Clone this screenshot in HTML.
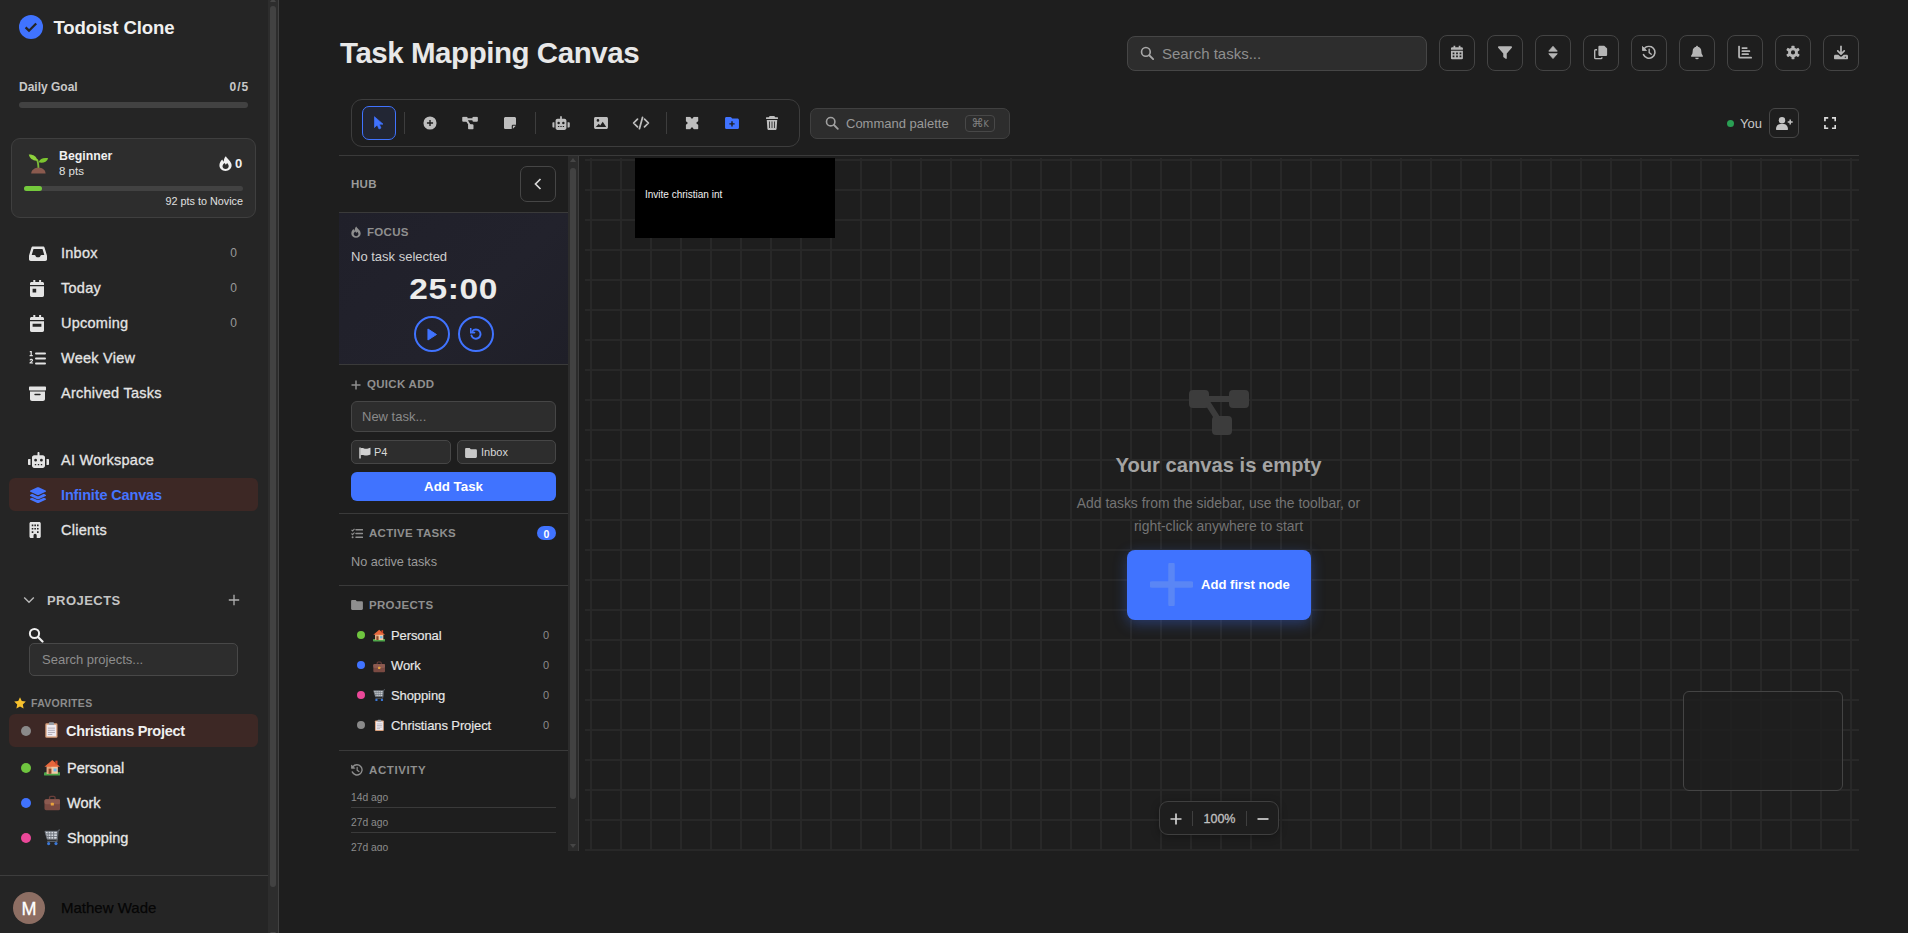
<!DOCTYPE html>
<html lang="en">
<head>
<meta charset="utf-8">
<title>Todoist Clone - Task Mapping Canvas</title>
<style>
*{box-sizing:border-box;margin:0;padding:0}
html,body{width:1908px;height:933px;overflow:hidden;background:#1e1e1e;color:#e0e0e0;font-family:"Liberation Sans",sans-serif;}
body{position:relative}
.abs{position:absolute}
svg{display:block}
.t{position:absolute;white-space:nowrap;line-height:1}
/* ---------- sidebar ---------- */
#sidebar{position:absolute;left:0;top:0;width:279px;height:933px;background:#252525;border-right:1px solid #424242;overflow:hidden}
#sb-track{position:absolute;left:268px;top:0;width:10px;height:933px;background:#2d2d2d}
#sb-thumb{position:absolute;left:270px;top:6px;width:6px;height:881px;border-radius:3px;background:#424242}
.nav{position:absolute;left:9px;width:249px;height:33px;border-radius:6px}
.nav.active{background:#3d2825}
.nav .ic{position:absolute;left:19.700px;top:8.600px;width:18px;height:17px;color:#e4e4e4}
.nav .lb{position:absolute;left:52px;top:9px;font-size:14.5px;line-height:16px;color:#e4e4e4;white-space:nowrap;letter-spacing:.25px;-webkit-text-stroke:.3px #e4e4e4}
.nav.active .lb{color:#4574ff;font-weight:bold;letter-spacing:-.15px;-webkit-text-stroke:0}
.nav .ct{position:absolute;right:21px;top:10px;font-size:12px;line-height:14px;color:#9a9a9a}
.dot{position:absolute;border-radius:50%}
/* ---------- main ---------- */
#main{position:absolute;left:279px;top:0;width:1629px;height:933px;background:#1e1e1e}
.hbtn{position:absolute;top:35px;width:36px;height:36px;border:1px solid #444;border-radius:8px;background:#1e1e1e;color:#b6b6b6}
.hbtn svg{position:absolute;left:50%;top:50%;transform:translate(-50%,-54%)}
.tbtn{position:absolute;top:106px;width:34px;height:34px;border-radius:7px;color:#bebebe}
.tbtn svg{position:absolute;left:50%;top:50%;transform:translate(-50%,-50%)}
.tsep{position:absolute;top:112px;width:1px;height:22px;background:#3d3d3d}
.hline{position:absolute;height:1px;background:#3a3a3a}
.sec{position:absolute;font-size:11px;font-weight:bold;letter-spacing:.3px;color:#8f8f8f;line-height:1;white-space:nowrap}
</style>
</head>
<body>
<div id="sidebar">
  <div id="sb-track"></div><svg class="abs" style="left:270px;top:-2px" width="6" height="4" viewBox="0 0 6 4"><path d="M3 0 L6 4 H0Z" fill="#464646"/></svg><svg class="abs" style="left:270px;top:932px" width="6" height="4" viewBox="0 0 6 4"><path d="M3 4 L6 0 H0Z" fill="#464646"/></svg><div id="sb-thumb"></div>
  <!-- logo -->
  <svg class="abs" style="left:19px;top:15px" width="24" height="24" viewBox="0 0 24 24"><circle cx="12" cy="12" r="12" fill="#4073ff"/><path d="M6.6 12.4l3.4 3.3 7.2-7.2" fill="none" stroke="#252525" stroke-width="2.3"/></svg>
  <div class="t" style="left:53.500px;top:19px;font-size:18.600px;font-weight:bold;color:#f0f0f0;letter-spacing:-.12px">Todoist Clone</div>
  <!-- daily goal -->
  <div class="t" style="left:19px;top:81px;font-size:12px;font-weight:bold;color:#c8c8c8">Daily Goal</div>
  <div class="t" style="right:29px;top:81px;font-size:12px;font-weight:bold;color:#c8c8c8;letter-spacing:.9px">0/5</div>
  <div class="abs" style="left:19px;top:102px;width:229px;height:6px;border-radius:3px;background:#424242"></div>
  <!-- level card -->
  <div class="abs" style="left:11px;top:138px;width:245px;height:80px;border:1px solid #3f3f3f;border-radius:9px;background:#2d2d2d">
    <svg class="abs" style="left:15.500px;top:14px" width="21" height="21" viewBox="0 0 21 21">
      <path d="M10.5 16 C10.3 11 10 8.5 9 6.5" fill="none" stroke="#7bb83a" stroke-width="1.8"/>
      <path d="M9.6 7.6 C8.5 3.2 4.5 1.2 0.8 1.6 C1.6 5.6 5.2 8.2 9.6 7.6Z" fill="#8ed23c"/>
      <path d="M10.6 9.3 C11.6 5.6 15.8 4.2 20.2 5.2 C18.8 9.2 14.4 10.6 10.6 9.3Z" fill="#7cc62f"/>
      <path d="M3.2 20.4 C3.6 16.6 6.6 14.8 10.5 14.8 C14.4 14.8 17.2 16.6 17.6 20.4Z" fill="#8a5a4e"/>
    </svg>
    <div class="t" style="left:47px;top:11px;font-size:12.3px;font-weight:bold;color:#f0f0f0">Beginner</div>
    <div class="t" style="left:47px;top:27px;font-size:11.500px;color:#e0e0e0">8 pts</div>
    <svg class="abs" style="left:207px;top:17px" width="13" height="15" viewBox="0 0 13 15"><path d="M6.9 0.2 C7.6 2 9.4 3 10.8 4.9 C12 6.5 12.6 7.9 12.6 9.3 C12.6 12.5 9.9 14.9 6.5 14.9 C3.1 14.9 0.4 12.5 0.4 9.3 C0.4 6.9 1.9 4.9 3.3 3.6 C3.6 4.6 4.1 5.3 4.8 5.8 C4.7 3.6 5.4 1.5 6.9 0.2Z M6.6 13 C8.4 13 9.7 11.8 9.7 10.2 C9.7 8.9 8.9 8 8.1 7.1 C7.7 8 7.2 8.4 6.7 8.7 C6.5 7.9 6 7.3 5.4 6.9 C4.4 7.9 3.5 8.9 3.5 10.2 C3.5 11.8 4.8 13 6.6 13Z" fill="#f0f0f0" fill-rule="evenodd"/></svg>
    <div class="t" style="left:223px;top:18px;font-size:13px;font-weight:bold;color:#f0f0f0">0</div>
    <div class="abs" style="left:12px;top:47px;width:219px;height:5px;border-radius:3px;background:#424242"><div style="width:18px;height:5px;border-radius:3px;background:#74c93c"></div></div>
    <div class="t" style="right:12px;top:57.300px;font-size:10.800px;color:#e0e0e0">92 pts to Novice</div>
  </div>
  <!-- nav -->
  <div class="nav" style="top:236px"><svg class="ic" viewBox="0 0 18 17"><path d="M3.9 1.6 h10.2 c.7 0 1.3.5 1.5 1.1 l2.2 7.2 c.1.3.2.6.2 1 v3.4 c0 .9-.8 1.7-1.7 1.7 H1.7 C.8 16 0 15.200 0 14.300 v-3.4 c0-.4.1-.7.2-1 L2.400 2.700 c.2-.6.8-1.1 1.500-1.100z M4.500 4 L2.700 10 h2.800 c.4 0 .7.2.9.5 l.6 1.200 c.2.300.5.500.900.500 h2.200 c.4 0 .7-.2.900-.5 l.6-1.200 c.2-.3.5-.5.9-.5 h2.800 L13.500 4z" fill="currentColor" fill-rule="evenodd"/></svg><span class="lb">Inbox</span><span class="ct">0</span></div>
  <div class="nav" style="top:271px"><svg class="ic" viewBox="0 0 18 17"><path d="M4.300 0 h2 v2 h3.800 v-2 h2 v2 h1.300 c.9 0 1.600.7 1.600 1.600 v1.400 H1 V3.600 C1 2.700 1.700 2 2.600 2 h1.700z M1 6.300 h14 v9 c0 .9-.7 1.600-1.600 1.600 H2.600 c-.9 0-1.600-.7-1.600-1.600z M3.600 8.800 v3.600 h3.600 v-3.600z" fill="currentColor" fill-rule="evenodd"/></svg><span class="lb">Today</span><span class="ct">0</span></div>
  <div class="nav" style="top:306px"><svg class="ic" viewBox="0 0 18 17"><path d="M4.300 0 h2 v2 h3.800 v-2 h2 v2 h1.300 c.9 0 1.600.7 1.600 1.600 v1.400 H1 V3.600 C1 2.700 1.700 2 2.600 2 h1.700z M1 6.300 h14 v9 c0 .9-.7 1.600-1.600 1.600 H2.600 c-.9 0-1.600-.7-1.600-1.600z M3.600 8.800 v3 h8.800 v-3z" fill="currentColor" fill-rule="evenodd"/></svg><span class="lb">Upcoming</span><span class="ct">0</span></div>
  <div class="nav" style="top:341px"><svg class="ic" viewBox="0 0 18 17"><g fill="currentColor"><rect x="6" y="2.500" width="11" height="2" rx="1"/><rect x="6" y="7.500" width="11" height="2" rx="1"/><rect x="6" y="12.500" width="11" height="2" rx="1"/><path d="M.8 1 h2 v4 h1 v1.200 H.6 V5 h1 V2.200 H.8z"/><path d="M.5 10.300 c0-1 .8-1.600 1.800-1.600 s1.800.6 1.800 1.500 c0 .6-.3 1-.8 1.400 l-.9.800 h1.700 v1.200 H.5 v-1 l1.900-1.700 c.3-.3.400-.4.400-.6 0-.3-.2-.4-.5-.4 s-.6.200-.6.600z"/></g></svg><span class="lb">Week View</span></div>
  <div class="nav" style="top:376px"><svg class="ic" viewBox="0 0 18 17"><path d="M1 1.500 h15 c.5 0 1 .4 1 1 v2 c0 .5-.4 1-1 1 H1 c-.5 0-1-.4-1-1 v-2 c0-.5.4-1 1-1z M1 6.600 h15 v7.300 c0 1.100-.9 2-2 2 H3 c-1.100 0-2-.9-2-2z M6 8.800 c-.4 0-.7.3-.7.700 s.3.700.7.700 h5 c.4 0 .7-.3.700-.7 s-.3-.7-.7-.7z" fill="currentColor" fill-rule="evenodd"/></svg><span class="lb">Archived Tasks</span></div>

  <div class="nav" style="top:443px"><svg class="ic" style="width:21px;left:19px" viewBox="0 0 21 17"><path d="M10.500 0 c.6 0 1 .4 1 1 v2.200 h3.300 c1.200 0 2.200 1 2.200 2.200 v8.400 c0 1.200-1 2.200-2.200 2.200 H6.200 c-1.200 0-2.200-1-2.200-2.200 V5.400 c0-1.200 1-2.200 2.200-2.200 h3.300 V1 c0-.6.400-1 1-1z M7.600 6.800 a1.400 1.400 0 1 0 0 2.800 a1.400 1.400 0 0 0 0-2.800z M13.400 6.800 a1.400 1.400 0 1 0 0 2.800 a1.400 1.400 0 0 0 0-2.800z M6.800 12 v1.200 h1.400 V12z M9.800 12 v1.200 h1.400 V12z M12.800 12 v1.200 h1.400 V12z M0 8 c0-.6.400-1 1-1 h1.500 v6 H1 c-.6 0-1-.4-1-1z M18.500 7 H20 c.6 0 1 .4 1 1 v4 c0 .6-.4 1-1 1 h-1.500z" fill="currentColor" fill-rule="evenodd"/></svg><span class="lb">AI Workspace</span></div>
  <div class="nav active" style="top:478px"><svg class="ic" style="color:#4574ff;height:16px" viewBox="0 0 18 17"><g fill="currentColor"><path d="M8.300.3 c.4-.2 1-.2 1.400 0 l7.400 3.400 c.6.300.6 1.100 0 1.400 L9.700 8.500 c-.4.200-1 .2-1.400 0 L.9 5.100 C.3 4.800.3 4 .9 3.700z"/><path d="M2.800 7.300 L.9 8.200 c-.6.300-.6 1.100 0 1.400 l7.400 3.400 c.4.200 1 .2 1.400 0 l7.400-3.400 c.6-.3.6-1.100 0-1.400 l-1.900-.9 -4.900 2.200 c-.8.400-1.800.4-2.600 0z"/><path d="M2.800 11.300 l-1.900.9 c-.6.300-.6 1.100 0 1.400 l7.400 3.400 c.4.200 1 .2 1.400 0 l7.400-3.400 c.6-.3.6-1.100 0-1.400 l-1.900-.9 -4.900 2.200 c-.8.400-1.800.4-2.600 0z"/></g></svg><span class="lb">Infinite Canvas</span></div>
  <div class="nav" style="top:513px"><svg class="ic" style="left:18.700px;height:16px" viewBox="0 0 18 17"><path d="M2.600 0 h8.800 c.9 0 1.600.7 1.600 1.600 v13.800 c0 .9-.7 1.600-1.600 1.600 H8.700 v-2.700 c0-.9-.7-1.700-1.700-1.700 s-1.700.8-1.700 1.700 V17 H2.600 C1.700 17 1 16.300 1 15.400 V1.600 C1 .7 1.700 0 2.600 0z M3.400 2.700 v1.700 h1.700 V2.700z M6.200 2.700 v1.700 h1.700 V2.700z M9 2.700 v1.700 h1.700 V2.700z M3.400 6.300 V8 h1.700 V6.300z M6.200 6.300 V8 h1.700 V6.300z M9 6.300 V8 h1.700 V6.300z M3.400 9.900 v1.700 h1.700 V9.900z M9 9.900 v1.700 h1.700 V9.900z" fill="currentColor" fill-rule="evenodd"/></svg><span class="lb">Clients</span></div>


  <!-- projects header -->
  <svg class="abs" style="left:23px;top:595px" width="12" height="10" viewBox="0 0 12 10"><path d="M1.200 2.500 L6 7.300 L10.800 2.500" fill="none" stroke="#b8b8b8" stroke-width="1.400"/></svg>
  <div class="t" style="left:47px;top:594px;font-size:13px;font-weight:bold;letter-spacing:.45px;color:#c4c4c4">PROJECTS</div>
  <svg class="abs" style="left:228px;top:594px" width="12" height="12" viewBox="0 0 12 12"><path d="M6 .8 V11.200 M.8 6 H11.200" stroke="#b0b0b0" stroke-width="1.300" fill="none"/></svg>
  <svg class="abs" style="left:28px;top:627px" width="16" height="16" viewBox="0 0 16 16"><circle cx="6.500" cy="6.500" r="4.600" fill="none" stroke="#f0f0f0" stroke-width="2"/><path d="M10 10 L14.500 14.500" stroke="#f0f0f0" stroke-width="2.200" stroke-linecap="round"/></svg>
  <div class="abs" style="left:29px;top:643px;width:209px;height:33px;border:1px solid #484848;border-radius:5px;background:#2d2d2d"><div class="t" style="left:12px;top:9px;font-size:13px;color:#8e8e8e">Search projects...</div></div>
  <!-- favorites -->
  <svg class="abs" style="left:14px;top:697px" width="12" height="12" viewBox="0 0 12 12"><path d="M6 .3 L7.750 4.100 L11.800 4.600 L8.800 7.400 L9.600 11.500 L6 9.500 L2.400 11.500 L3.200 7.400 L.2 4.600 L4.250 4.100Z" fill="#f6c12e"/></svg>
  <div class="t" style="left:31px;top:698px;font-size:10.500px;font-weight:bold;letter-spacing:.3px;color:#8c8c8c">FAVORITES</div>
  <div class="nav active" style="top:714px">
    <span class="dot" style="left:12px;top:12px;width:10px;height:10px;background:#8a8a8a"></span>
    <svg class="abs" style="left:35.200px;top:8px" width="14.800" height="16.600" viewBox="0 0 17 19"><rect x="1.500" y="1.500" width="14" height="16.500" rx="1.500" fill="#d9a07c"/><rect x="3" y="3.200" width="11" height="13.300" fill="#eeeaf0"/><rect x="5.500" y=".3" width="6" height="3.200" rx="1" fill="#9aa0a8"/><path d="M4.500 7 h8 M4.500 9.500 h8 M4.500 12 h8 M4.500 14.300 h5" stroke="#a8a4b0" stroke-width="1"/></svg>
    <div class="t" style="left:57px;top:10px;font-size:14.500px;font-weight:bold;color:#f0f0f0;letter-spacing:-.3px">Christians Project</div>
  </div>
  <div class="nav" style="top:751px">
    <span class="dot" style="left:12px;top:12px;width:10px;height:10px;background:#6fc53f"></span>
    <svg class="abs" style="left:34.700px;top:8.200px" width="16.600" height="16.600" viewBox="0 0 18 18"><rect x="0" y="14.500" width="18" height="3.500" rx="1" fill="#4ea84a"/><rect x="3" y="7.500" width="12" height="8.500" fill="#f2c9a4"/><rect x="3" y="7.500" width="5" height="8.500" fill="#e0a77e"/><path d="M9 1 L17.500 8.500 H.5Z" fill="#e8673c"/><rect x="12.300" y="1.800" width="2.400" height="4" fill="#c9452a"/><rect x="5" y="10.500" width="3" height="5.500" fill="#8c4a2c"/><rect x="10.300" y="10.300" width="3.400" height="3.200" fill="#6db8e8"/></svg>
    <div class="t" style="left:58px;top:10px;font-size:14.500px;color:#e8e8e8;-webkit-text-stroke:.3px #e8e8e8">Personal</div>
  </div>
  <div class="nav" style="top:786px">
    <span class="dot" style="left:12px;top:12px;width:10px;height:10px;background:#4073ff"></span>
    <svg class="abs" style="left:34.700px;top:9px" width="16.600" height="16.600" viewBox="0 0 18 18"><path d="M6 4.500 V3 c0-.8.600-1.500 1.500-1.500 h3 c.9 0 1.500.7 1.500 1.500 v1.500" fill="none" stroke="#6a3f3a" stroke-width="1.500"/><rect x=".5" y="4.500" width="17" height="12" rx="1.800" fill="#7a4a42"/><rect x=".5" y="4.500" width="17" height="5.500" rx="1.800" fill="#8c5a50"/><rect x="7.300" y="8.500" width="3.400" height="3" rx=".6" fill="#e8a33c"/></svg>
    <div class="t" style="left:58px;top:10px;font-size:14.500px;color:#e8e8e8;-webkit-text-stroke:.3px #e8e8e8">Work</div>
  </div>
  <div class="nav" style="top:821px">
    <span class="dot" style="left:12px;top:12px;width:10px;height:10px;background:#eb4899"></span>
    <svg class="abs" style="left:34.700px;top:8px" width="16.600" height="16.600" viewBox="0 0 18 18"><path d="M1 2.500 H14.500 V11 H3.500Z" fill="#d8dce2"/><path d="M1 2.500 H14.500 M2 5.300 H14.500 M2.800 8.100 H14.500 M3.500 11 H14.500 M4.500 2.500 V11 M7.500 2.500 V11 M10.500 2.500 V11 M14.500 2.500 V11 M1 2.500 L3.500 11" stroke="#6a7078" stroke-width="1" fill="none"/><path d="M17.500 .8 L15.500 1.500 L14 13.500 H3.500" stroke="#5a6068" stroke-width="1.300" fill="none"/><circle cx="5" cy="15.800" r="1.700" fill="#3b78d8"/><circle cx="13" cy="15.800" r="1.700" fill="#3b78d8"/></svg>
    <div class="t" style="left:58px;top:10px;font-size:14.500px;color:#e8e8e8;-webkit-text-stroke:.3px #e8e8e8">Shopping</div>
  </div>
  <!-- footer -->
  <div class="abs" style="left:0;top:875px;width:268px;height:1px;background:#3d3d3d"></div>
  <div class="abs" style="left:13px;top:892px;width:32px;height:32px;border-radius:50%;background:#8d6e63"><div class="t" style="left:0;width:32px;text-align:center;top:7.500px;font-size:18px;color:#fff;-webkit-text-stroke:.3px #fff">M</div></div>
  <div class="t" style="left:61px;top:900px;font-size:15px;color:#060606;-webkit-text-stroke:.25px #060606">Mathew Wade</div>
</div>
<div id="main">
  <div class="t" style="left:61px;top:38px;font-size:29.500px;font-weight:bold;color:#e8e8e8;letter-spacing:-.45px">Task Mapping Canvas</div>
  <div class="abs" style="left:848px;top:36px;width:300px;height:35px;border:1px solid #464646;border-radius:8px;background:#2d2d2d">
    <svg class="abs" style="left:11.500px;top:8.500px" width="14.500" height="14.500" viewBox="0 0 16 16"><circle cx="6.500" cy="6.500" r="4.800" fill="none" stroke="#a8a8a8" stroke-width="1.800"/><path d="M10.200 10.200 L14.500 14.500" stroke="#a8a8a8" stroke-width="2" stroke-linecap="round"/></svg>
    <div class="t" style="left:34px;top:9px;font-size:15px;color:#8f8f8f">Search tasks...</div>
  </div>
  <div class="hbtn" style="left:1160px"><svg width="12.2" height="14.0" viewBox="0 0 14 16"><path d="M3 0 h2 v2 h4 V0 h2 v2 h1.500 c.8 0 1.500.7 1.500 1.500 V5 H0 V3.500 C0 2.700.7 2 1.500 2 H3z M0 6 h14 v8.500 c0 .8-.7 1.500-1.500 1.500 h-11 C.7 16 0 15.300 0 14.500z M2 8 v2 h2 V8z M6 8 v2 h2 V8z M10 8 v2 h2 V8z M2 11.500 v2 h2 v-2z M6 11.500 v2 h2 v-2z M10 11.500 v2 h2 v-2z" fill="currentColor" fill-rule="evenodd"/></svg></div>
  <div class="hbtn" style="left:1208px"><svg width="14.0" height="14.0" viewBox="0 0 16 16"><path d="M.9 1 h14.200 c.8 0 1.200.9.700 1.500 L10 9.300 V14.500 c0 .7-.8 1.100-1.300.7 l-2.300-1.700 C6.100 13.300 6 13 6 12.700 V9.300 L.2 2.500 C-.3 1.900.1 1 .9 1z" fill="currentColor"/></svg></div>
  <div class="hbtn" style="left:1256px"><svg width="9.6" height="14.0" viewBox="0 0 11 16"><path d="M5.500 1 L10.400 6.500 H.6Z M5.500 15 L.6 9.500 H10.400Z" fill="currentColor" stroke="currentColor" stroke-width="1" stroke-linejoin="round"/></svg></div>
  <div class="hbtn" style="left:1304px"><svg width="14.0" height="14.0" viewBox="0 0 16 16"><path d="M6.500 0 h5 L15 3.500 V10.500 c0 .8-.7 1.500-1.500 1.500 h-7 C5.700 12 5 11.300 5 10.500 v-9 C5 .7 5.700 0 6.500 0z" fill="currentColor"/><path d="M3.500 5 H1.800 C1.200 5 .8 5.400.8 6 v8.200 c0 .6.400 1 1 1 H8 c.6 0 1-.4 1-1 V13.500" fill="none" stroke="currentColor" stroke-width="1.600"/></svg></div>
  <div class="hbtn" style="left:1352px"><svg width="14.0" height="14.0" viewBox="0 0 16 16"><path d="M2.600 3.600 A6.800 6.800 0 1 1 1.700 10.500" fill="none" stroke="currentColor" stroke-width="1.800" stroke-linecap="round"/><path d="M.5 1.200 V5.800 H5.100Z" fill="currentColor" stroke="currentColor" stroke-width="1" stroke-linejoin="round"/><path d="M8.200 4.300 V8.200 L10.600 10" fill="none" stroke="currentColor" stroke-width="1.600" stroke-linecap="round"/></svg></div>
  <div class="hbtn" style="left:1400px"><svg width="12.2" height="14.0" viewBox="0 0 14 16"><path d="M7 0 c.6 0 1 .4 1 1 v.6 c2.300.5 4 2.500 4 4.900 v.6 c0 1.500.5 2.900 1.400 4.100 l.4.500 c.4.500.1 1.300-.6 1.300 H.8 c-.7 0-1-.8-.6-1.300 l.4-.5 C1.500 10 2 8.600 2 7.100 v-.6 C2 4.100 3.700 2.100 6 1.600 V1 c0-.6.400-1 1-1z M5 14 h4 c0 1.100-.9 2-2 2 s-2-.9-2-2z" fill="currentColor"/></svg></div>
  <div class="hbtn" style="left:1448px"><svg width="14.0" height="14.0" viewBox="0 0 16 16"><path d="M1.200 1 V12.800 c0 .7.500 1.200 1.200 1.200 H15" fill="none" stroke="currentColor" stroke-width="2" stroke-linecap="round"/><path d="M5 3 H10 M5 6.500 H13 M5 10 H11.500" stroke="currentColor" stroke-width="2" stroke-linecap="round"/></svg></div>
  <div class="hbtn" style="left:1496px"><svg width="14.0" height="14.0" viewBox="0 0 16 16"><path d="M8 2.400 A5.600 5.600 0 1 0 8 13.600 A5.600 5.600 0 1 0 8 2.400z M8 5.600 A2.400 2.400 0 1 1 8 10.400 A2.400 2.400 0 1 1 8 5.600z" fill="currentColor" fill-rule="evenodd"/><g fill="currentColor"><rect x="6.300" y="0" width="3.400" height="4" rx=".8"/><rect x="6.300" y="12" width="3.400" height="4" rx=".8"/><rect x="6.300" y="0" width="3.400" height="4" rx=".8" transform="rotate(60 8 8)"/><rect x="6.300" y="12" width="3.400" height="4" rx=".8" transform="rotate(60 8 8)"/><rect x="6.300" y="0" width="3.400" height="4" rx=".8" transform="rotate(120 8 8)"/><rect x="6.300" y="12" width="3.400" height="4" rx=".8" transform="rotate(120 8 8)"/></g></svg></div>
  <div class="hbtn" style="left:1544px"><svg width="14.0" height="14.0" viewBox="0 0 16 16"><path d="M8 .8 V9.500 M4.300 6.300 L8 10 L11.700 6.300" fill="none" stroke="currentColor" stroke-width="2" stroke-linecap="round" stroke-linejoin="round"/><path d="M1.500 10.500 H4.800 L6.500 12.200 c.8.800 2.200.8 3 0 L11.200 10.500 H14.500 c.8 0 1.500.7 1.500 1.500 v2.500 c0 .8-.7 1.500-1.500 1.500 h-13 C.7 16 0 15.300 0 14.500 V12 c0-.8.700-1.500 1.500-1.500z M13 12.600 a.8.800 0 1 0 0 1.600 a.8.800 0 0 0 0-1.600z" fill="currentColor" fill-rule="evenodd"/></svg></div>
  <!-- toolbar -->
  <div class="abs" style="left:72px;top:99px;width:449px;height:48px;border:1px solid #3d3d3d;border-radius:11px;background:#1e1e1e"></div>
  <div class="tbtn" style="left:83px;border:1.500px solid #4073ff;background:#222634;color:#4073ff"><svg width="10.5" height="14.0" viewBox="0 0 12 16"><path d="M.8 .8 V13.200 L4 10.200 L6 14.800 L8.300 13.800 L6.300 9.300 H10.600Z" fill="currentColor" stroke="currentColor" stroke-width=".8" stroke-linejoin="round"/></svg></div>
  <div class="tbtn" style="left:134px"><svg width="14.0" height="14.0" viewBox="0 0 16 16"><path d="M8 .5 A7.500 7.500 0 1 0 8 15.500 A7.500 7.500 0 1 0 8 .5z M7.200 4.500 h1.600 v2.700 h2.700 v1.600 H8.800 v2.700 H7.200 V8.800 H4.500 V7.200 h2.700z" fill="currentColor" fill-rule="evenodd"/></svg></div>
  <div class="tbtn" style="left:174px"><svg width="15.8" height="13.1" viewBox="0 0 18 15"><path d="M3 3.200 H15 M4.500 3.200 L10 12" stroke="currentColor" stroke-width="2.300" fill="none"/><rect x="0" y=".2" width="6.200" height="6" rx="1.300" fill="currentColor"/><rect x="11.800" y=".2" width="6.200" height="6" rx="1.300" fill="currentColor"/><rect x="6.800" y="9" width="6.200" height="6" rx="1.300" fill="currentColor"/></svg></div>
  <div class="tbtn" style="left:214px"><svg width="12.2" height="12.2" viewBox="0 0 14 14"><path d="M2 0 h10 c1.100 0 2 .9 2 2 v7 h-3.500 c-.8 0 -1.500.7-1.500 1.500 V14 H2 c-1.100 0-2-.9-2-2 V2 C0 .9.9 0 2 0z M10.300 13.700 V10.800 c0-.3.200-.5.500-.5 h2.900z" fill="currentColor"/></svg></div>
  <div class="tbtn" style="left:265px"><svg width="17.5" height="14.0" viewBox="0 0 20 16"><path d="M10 0 c.6 0 1 .4 1 1 v2 h3 c1.200 0 2.200 1 2.200 2.200 v8.600 c0 1.200-1 2.200-2.200 2.200 H6 c-1.200 0-2.200-1-2.200-2.200 V5.200 C3.800 4 4.800 3 6 3 h3 V1 c0-.6.400-1 1-1z M7.300 6.500 a1.400 1.400 0 1 0 0 2.800 a1.400 1.400 0 0 0 0-2.800z M12.700 6.500 a1.400 1.400 0 1 0 0 2.800 a1.400 1.400 0 0 0 0-2.800z M6.500 11.500 v1.200 h1.500 v-1.200z M9.250 11.500 v1.200 h1.500 v-1.200z M12 11.500 v1.200 h1.500 v-1.200z M0 8 c0-.6.400-1 1-1 h1.500 v6 H1 c-.6 0-1-.4-1-1z M17.500 7 H19 c.6 0 1 .4 1 1 v4 c0 .6-.4 1-1 1 h-1.500z" fill="currentColor" fill-rule="evenodd"/></svg></div>
  <div class="tbtn" style="left:305px"><svg width="14.0" height="12.2" viewBox="0 0 16 14"><path d="M2 0 h12 c1.100 0 2 .9 2 2 v10 c0 1.100-.9 2-2 2 H2 c-1.100 0-2-.9-2-2 V2 C0 .9.900 0 2 0z M4.500 2.500 a1.500 1.500 0 1 0 0 3 a1.500 1.500 0 0 0 0-3z M2 11.500 h12 L10 5.500 L7 9.800 L5.500 8 z" fill="currentColor" fill-rule="evenodd"/></svg></div>
  <div class="tbtn" style="left:345px"><svg width="17.5" height="14.0" viewBox="0 0 20 16"><path d="M6 3.500 L1.500 8 L6 12.500 M14 3.500 L18.500 8 L14 12.500 M11.800 1.500 L8.200 14.500" fill="none" stroke="currentColor" stroke-width="2" stroke-linecap="round" stroke-linejoin="round"/></svg></div>
  <div class="tbtn" style="left:396px"><svg width="12.600" height="12.600" viewBox="0 0 14 14"><path fill-rule="evenodd" d="M.8 0 H4.900 L7 2.500 L9.100 0 H13.200 c.5 0 .8.300.8.800 V4.900 L11.500 7 L14 9.100 V13.200 c0 .5-.3.800-.8.800 H9.100 L7 11.500 L4.900 14 H.8 c-.5 0-.8-.3-.8-.8 V9.100 L2.500 7 L0 4.900 V.8 C0 .3.300 0 .8 0z" fill="currentColor"/></svg></div>
  <div class="tbtn" style="left:436px;color:#4073ff"><svg width="14.0" height="12.2" viewBox="0 0 16 14"><path d="M1.800 0 h4 c.5 0 .9.200 1.200.5 L8.200 1.800 H14.200 c1 0 1.800.8 1.800 1.800 v8.600 c0 1-.8 1.800-1.800 1.800 H1.800 C.8 14 0 13.200 0 12.200 V1.800 C0 .8.800 0 1.800 0z M7.200 5 v2.200 H5 v1.600 h2.200 V11 h1.600 V8.800 H11 V7.200 H8.800 V5z" fill="currentColor" fill-rule="evenodd"/></svg></div>
  <div class="tbtn" style="left:476px"><svg width="12.2" height="14.0" viewBox="0 0 14 16"><path d="M4.800 0 h4.400 c.4 0 .7.200.9.500 L10.600 1.500 H13 c.6 0 1 .4 1 1 s-.4 1-1 1 H1 c-.6 0-1-.4-1-1 s.4-1 1-1 h2.400 L3.900.5 C4.100.2 4.400 0 4.800 0z M1 4.500 h12 l-.7 10 c-.1.800-.7 1.500-1.600 1.500 H3.300 c-.8 0-1.500-.7-1.600-1.500z M3.600 6.300 v7.400 h.9 v-7.400z M6.550 6.300 v7.400 h.9 v-7.400z M9.500 6.300 v7.400 h.9 v-7.400z" fill="currentColor" fill-rule="evenodd"/></svg></div>
  <div class="tsep" style="left:125px"></div><div class="tsep" style="left:256px"></div><div class="tsep" style="left:387px"></div>
  <!-- command palette -->
  <div class="abs" style="left:531px;top:108px;width:200px;height:31px;border:1px solid #404040;border-radius:7px;background:#2d2d2d">
    <svg class="abs" style="left:14px;top:7px" width="14" height="14" viewBox="0 0 14 14"><circle cx="5.700" cy="5.700" r="4.200" fill="none" stroke="#a0a0a0" stroke-width="1.600"/><path d="M9 9 L12.800 12.800" stroke="#a0a0a0" stroke-width="1.800" stroke-linecap="round"/></svg>
    <div class="t" style="left:35px;top:8px;font-size:13px;color:#9a9a9a">Command palette</div>
    <div class="abs" style="left:154px;top:6px;width:30px;height:17px;border:1px solid #484848;border-radius:4px"><div class="t" style="left:0;width:28px;text-align:center;top:1px;font-size:12px;color:#808080;font-family:'DejaVu Sans','Liberation Sans',sans-serif">&#8984;<span style="font-size:8px">K</span></div></div>
  </div>
  <!-- presence -->
  <span class="dot" style="left:1447.800px;top:119.500px;width:7.200px;height:7.200px;background:#2a9f54"></span>
  <div class="t" style="left:1461px;top:117px;font-size:13px;color:#c8c8c8">You</div>
  <div class="abs" style="left:1490px;top:108px;width:30px;height:30px;border:1px solid #464646;border-radius:6px;color:#c4c4c4"><svg class="abs" style="left:6px;top:8px" width="17" height="13" viewBox="0 0 17 13"><circle cx="6" cy="3.200" r="3.200" fill="currentColor"/><path d="M0 12 c0-3 2-5 4.500-5 h3 c2.500 0 4.500 2 4.500 5 c0 .6-.4 1-1 1 H1 c-.6 0-1-.4-1-1z" fill="currentColor"/><path d="M14.200 2.500 v5 M11.700 5 h5" stroke="currentColor" stroke-width="1.500" fill="none"/></svg></div>
  <svg class="abs" style="left:1545px;top:117px" width="12.200" height="12.200" viewBox="0 0 13 13"><path d="M1 4.500 V1 H4.500 M8.500 1 H12 V4.500 M12 8.500 V12 H8.500 M4.500 12 H1 V8.500" fill="none" stroke="#dcdcdc" stroke-width="1.800"/></svg>
  <div class="hline" style="left:60px;top:155px;width:1520px"></div>

  <!-- hub panel -->
  <div class="abs" id="hub" style="left:61px;top:156px;width:239px;height:695px;overflow:hidden">
  </div>
  <div class="sec" style="left:72px;top:179px;color:#9a9a9a;font-size:11.500px">HUB</div>
  <div class="abs" style="left:241px;top:166px;width:36px;height:36px;border:1px solid #464646;border-radius:7px"><svg class="abs" style="left:12px;top:10px" width="10" height="14" viewBox="0 0 10 14"><path d="M7.500 2 L2.500 7 L7.500 12" fill="none" stroke="#d8d8d8" stroke-width="1.700"/></svg></div>
  <div class="hline" style="left:60px;top:212px;width:229px"></div>
  <div class="abs" style="left:60px;top:213px;width:229px;height:151px;background:linear-gradient(135deg,#20202a 0%,#22222c 60%,#1f1f28 100%)"></div>
  <svg class="abs" style="left:72px;top:226px" width="10" height="12" viewBox="0 0 13 15"><path d="M6.900.2 C7.600 2 9.400 3 10.800 4.900 C12 6.500 12.600 7.900 12.600 9.300 C12.600 12.500 9.900 14.900 6.500 14.900 C3.100 14.900.4 12.500.4 9.300 C.4 6.900 1.900 4.900 3.300 3.600 C3.600 4.600 4.100 5.300 4.800 5.800 C4.700 3.600 5.400 1.500 6.900.2Z M6.600 13 C8.400 13 9.700 11.800 9.700 10.200 C9.700 8.900 8.900 8 8.100 7.100 C7.700 8 7.200 8.400 6.700 8.700 C6.500 7.900 6 7.300 5.400 6.900 C4.400 7.900 3.500 8.900 3.500 10.200 C3.500 11.800 4.800 13 6.600 13Z" fill="#8f8f8f" fill-rule="evenodd"/></svg>
  <div class="sec" style="left:88px;top:227px;font-size:11.500px">FOCUS</div>
  <div class="t" style="left:72px;top:250px;font-size:13px;color:#d0d0d0">No task selected</div>
  <div class="t" style="left:60px;top:274px;width:229px;text-align:center;font-size:30.300px;font-weight:bold;letter-spacing:.6px;color:#ececec;transform:scaleX(1.105);transform-origin:113px 50%">25:00</div>
  <div class="abs" style="left:135px;top:316px;width:36px;height:36px;border:2px solid #4073ff;border-radius:50%"><svg class="abs" style="left:9.800px;top:9.500px" width="12" height="13" viewBox="0 0 14 16"><path d="M2 1.200 L12.500 8 L2 14.800Z" fill="#4073ff" stroke="#4073ff" stroke-width="1.200" stroke-linejoin="round"/></svg></div>
  <div class="abs" style="left:179px;top:316px;width:36px;height:36px;border:2px solid #4073ff;border-radius:50%"><svg class="abs" style="left:10px;top:10px" width="12" height="12" viewBox="0 0 12 12"><path d="M2.300 3.300 A4.600 4.600 0 1 1 1.500 7.500" fill="none" stroke="#4073ff" stroke-width="1.900" stroke-linecap="round"/><path d="M.6 .8 V4.600 H4.400" fill="none" stroke="#4073ff" stroke-width="1.900" stroke-linecap="round" stroke-linejoin="round"/></svg></div>
  <div class="hline" style="left:60px;top:364px;width:229px"></div>
  <!-- quick add -->
  <svg class="abs" style="left:72px;top:380px" width="10" height="10" viewBox="0 0 10 10"><path d="M5 .5 V9.500 M.5 5 H9.500" stroke="#8f8f8f" stroke-width="1.500" fill="none"/></svg>
  <div class="sec" style="left:88px;top:379px;font-size:11.500px">QUICK ADD</div>
  <div class="abs" style="left:72px;top:401px;width:205px;height:31px;border:1px solid #464646;border-radius:6px;background:#2d2d2d"><div class="t" style="left:10px;top:8px;font-size:13px;color:#8a8a8a">New task...</div></div>
  <div class="abs" style="left:72px;top:440px;width:100px;height:24px;border:1px solid #464646;border-radius:5px;background:#2d2d2d"><svg class="abs" style="left:7px;top:6px" width="12" height="12" viewBox="0 0 12 12"><path d="M1 .5 V11.500" stroke="#d0d0d0" stroke-width="1.500"/><path d="M1.500 1.500 C3.500 .3 5 1.800 7 1.800 C8.500 1.800 9.500 1.300 11.500 .8 V7.500 C9.500 8.300 8.500 8.600 7 8.600 C5 8.600 3.500 7.300 1.500 8.300Z" fill="#d0d0d0"/></svg><div class="t" style="left:22px;top:6px;font-size:11px;color:#d8d8d8">P4</div></div>
  <div class="abs" style="left:178px;top:440px;width:99px;height:24px;border:1px solid #464646;border-radius:5px;background:#2d2d2d"><svg class="abs" style="left:7px;top:7px" width="12" height="10" viewBox="0 0 13 11"><path d="M1.300 0 h3.200 c.4 0 .8.200 1 .5 l.8 1 H11.700 c.7 0 1.300.6 1.300 1.300 v6.900 c0 .7-.6 1.300-1.300 1.300 H1.300 C.6 11 0 10.400 0 9.700 V1.300 C0 .6.600 0 1.300 0z" fill="#c8c8c8"/></svg><div class="t" style="left:23px;top:6px;font-size:11px;color:#d8d8d8">Inbox</div></div>
  <div class="abs" style="left:72px;top:472px;width:205px;height:29px;border-radius:6px;background:#4073ff"><div class="t" style="left:0;width:205px;text-align:center;top:8px;font-size:13.300px;font-weight:bold;color:#fff">Add Task</div></div>
  <div class="hline" style="left:60px;top:513px;width:229px"></div>
  <!-- active tasks -->
  <svg class="abs" style="left:72px;top:528px" width="12" height="11" viewBox="0 0 12 11"><path d="M.5 1.800 L1.600 2.900 L3.500 .8 M.5 5.500 L1.600 6.600 L3.500 4.500" fill="none" stroke="#8f8f8f" stroke-width="1.100"/><rect x=".6" y="8.300" width="2" height="2" rx="1" fill="#8f8f8f"/><path d="M5 1.800 H11.500 M5 5.500 H11.500 M5 9.300 H11.500" stroke="#8f8f8f" stroke-width="1.500" stroke-linecap="round"/></svg>
  <div class="sec" style="left:90px;top:528px;font-size:11.500px">ACTIVE TASKS</div>
  <div class="abs" style="left:258px;top:526px;width:19px;height:14px;border-radius:7px;background:#4073ff"><div class="t" style="left:0;width:19px;text-align:center;top:2.500px;font-size:10.500px;font-weight:bold;color:#fff">0</div></div>
  <div class="t" style="left:72px;top:556px;font-size:12.700px;color:#9a9a9a">No active tasks</div>
  <div class="hline" style="left:60px;top:585px;width:229px"></div>
  <!-- projects -->
  <svg class="abs" style="left:72px;top:600px" width="12" height="10" viewBox="0 0 13 11"><path d="M1.300 0 h3.200 c.4 0 .8.200 1 .5 l.8 1 H11.700 c.7 0 1.300.6 1.300 1.300 v6.900 c0 .7-.6 1.300-1.300 1.300 H1.300 C.6 11 0 10.400 0 9.700 V1.300 C0 .6.600 0 1.300 0z" fill="#8f8f8f"/></svg>
  <div class="sec" style="left:90px;top:600px;font-size:11.500px">PROJECTS</div>
  <span class="dot" style="left:78px;top:631px;width:8px;height:8px;background:#6fc53f"></span>
  <svg class="abs" style="left:93.700px;top:629.2px" width="12.400" height="12.400" viewBox="0 0 18 18"><rect x="0" y="14.500" width="18" height="3.500" rx="1" fill="#4ea84a"/><rect x="3" y="7.500" width="12" height="8.500" fill="#f2c9a4"/><rect x="3" y="7.500" width="5" height="8.500" fill="#e0a77e"/><path d="M9 1 L17.500 8.500 H.5Z" fill="#e8673c"/><rect x="12.300" y="1.800" width="2.400" height="4" fill="#c9452a"/><rect x="5" y="10.500" width="3" height="5.500" fill="#8c4a2c"/><rect x="10.300" y="10.300" width="3.400" height="3.200" fill="#6db8e8"/></svg>
  <div class="t" style="left:112px;top:629px;font-size:13px;color:#e8e8e8;-webkit-text-stroke:.15px #e8e8e8;letter-spacing:-.1px">Personal</div>
  <div class="t" style="left:264px;top:630px;font-size:11px;color:#8c8c8c">0</div>
  <span class="dot" style="left:78px;top:661px;width:8px;height:8px;background:#4073ff"></span>
  <svg class="abs" style="left:93.700px;top:660.5px" width="12.400" height="12.400" viewBox="0 0 18 18"><path d="M6 4.500 V3 c0-.8.600-1.500 1.500-1.500 h3 c.9 0 1.500.7 1.500 1.500 v1.500" fill="none" stroke="#6a3f3a" stroke-width="1.500"/><rect x=".5" y="4.500" width="17" height="12" rx="1.800" fill="#7a4a42"/><rect x=".5" y="4.500" width="17" height="5.500" rx="1.800" fill="#8c5a50"/><rect x="7.300" y="8.500" width="3.400" height="3" rx=".6" fill="#e8a33c"/></svg>
  <div class="t" style="left:112px;top:659px;font-size:13px;color:#e8e8e8;-webkit-text-stroke:.15px #e8e8e8;letter-spacing:-.1px">Work</div>
  <div class="t" style="left:264px;top:660px;font-size:11px;color:#8c8c8c">0</div>
  <span class="dot" style="left:78px;top:691px;width:8px;height:8px;background:#eb4899"></span>
  <svg class="abs" style="left:93.700px;top:689.2px" width="12.400" height="12.400" viewBox="0 0 18 18"><path d="M1 2.500 H14.500 V11 H3.500Z" fill="#d8dce2"/><path d="M1 2.500 H14.500 M2 5.300 H14.500 M2.800 8.100 H14.500 M3.500 11 H14.500 M4.500 2.500 V11 M7.500 2.500 V11 M10.500 2.500 V11 M14.500 2.500 V11 M1 2.500 L3.500 11" stroke="#6a7078" stroke-width="1" fill="none"/><path d="M17.500 .8 L15.500 1.500 L14 13.500 H3.500" stroke="#5a6068" stroke-width="1.300" fill="none"/><circle cx="5" cy="15.800" r="1.700" fill="#3b78d8"/><circle cx="13" cy="15.800" r="1.700" fill="#3b78d8"/></svg>
  <div class="t" style="left:112px;top:689px;font-size:13px;color:#e8e8e8;-webkit-text-stroke:.15px #e8e8e8;letter-spacing:-.1px">Shopping</div>
  <div class="t" style="left:264px;top:690px;font-size:11px;color:#8c8c8c">0</div>
  <span class="dot" style="left:78px;top:721px;width:8px;height:8px;background:#8a8a8a"></span>
  <svg class="abs" style="left:95px;top:719.300px" width="10.800" height="13" viewBox="0 0 17 19"><rect x="1.500" y="1.500" width="14" height="16.500" rx="1.500" fill="#d9a07c"/><rect x="3" y="3.200" width="11" height="13.300" fill="#eeeaf0"/><rect x="5.500" y=".3" width="6" height="3.200" rx="1" fill="#9aa0a8"/><path d="M4.500 7 h8 M4.500 9.500 h8 M4.500 12 h8 M4.500 14.300 h5" stroke="#a8a4b0" stroke-width="1"/></svg>
  <div class="t" style="left:112px;top:719px;font-size:13px;color:#e8e8e8;-webkit-text-stroke:.15px #e8e8e8;letter-spacing:-.1px">Christians Project</div>
  <div class="t" style="left:264px;top:720px;font-size:11px;color:#8c8c8c">0</div>
  <div class="hline" style="left:60px;top:750px;width:229px"></div>
  <!-- activity -->
  <svg class="abs" style="left:72px;top:764px" width="12" height="12" viewBox="0 0 16 16"><path d="M2.600 3.600 A6.800 6.800 0 1 1 1.700 10.500" fill="none" stroke="#8f8f8f" stroke-width="1.800" stroke-linecap="round"/><path d="M.5 1.200 V5.800 H5.100Z" fill="#8f8f8f" stroke="#8f8f8f" stroke-width="1" stroke-linejoin="round"/><path d="M8.200 4.300 V8.200 L10.600 10" fill="none" stroke="#8f8f8f" stroke-width="1.600" stroke-linecap="round"/></svg>
  <div class="sec" style="left:90px;top:765px;font-size:11.500px;letter-spacing:.6px">ACTIVITY</div>
  <div class="t" style="left:72px;top:793px;font-size:10.300px;color:#8c8c8c">14d ago</div>
  <div class="hline" style="left:72px;top:807px;width:205px"></div>
  <div class="t" style="left:72px;top:818px;font-size:10.300px;color:#8c8c8c">27d ago</div>
  <div class="hline" style="left:72px;top:832px;width:205px"></div>
  <div class="abs" style="left:72px;top:842px;width:60px;height:9px;overflow:hidden"><div class="t" style="left:0;top:1px;font-size:10.300px;color:#8c8c8c">27d ago</div></div>
  <!-- hub scrollbar -->
  <div class="abs" style="left:289px;top:156px;width:10px;height:695px;background:#2c2c2c"></div>
  <div class="abs" style="left:299px;top:156px;width:1px;height:695px;background:#3d3d3d"></div>
  <div class="abs" style="left:291px;top:168px;width:6px;height:631px;border-radius:3px;background:#424242"></div>
  <svg class="abs" style="left:291px;top:158px" width="6" height="4" viewBox="0 0 6 4"><path d="M3 0 L6 4 H0Z" fill="#464646"/></svg>
  <svg class="abs" style="left:291px;top:844px" width="6" height="4" viewBox="0 0 6 4"><path d="M3 4 L6 0 H0Z" fill="#464646"/></svg>

  <!-- canvas -->
  <div class="abs" id="canvas" style="left:306px;top:158px;width:1274px;height:693px;overflow:hidden;background-color:#1e1e1e;background-image:linear-gradient(to right,#282828 2px,transparent 2px),linear-gradient(to bottom,#282828 2px,transparent 2px);background-size:30px 30px;background-position:5px 1px">
    <div class="abs" style="left:50px;top:0;width:200px;height:80px;background:#000"><div class="t" style="left:10px;top:32px;font-size:10px;color:#f0f0f0">Invite christian int</div></div>
    <!-- empty state -->
    <svg class="abs" style="left:604px;top:231px" width="60" height="47" viewBox="0 0 60 47"><g fill="#3c3c3c"><path d="M10 10 H50 M16 10 L34 38" stroke="#3c3c3c" stroke-width="6" fill="none"/><rect x="0" y="1" width="20" height="18" rx="4"/><rect x="40" y="1" width="20" height="18" rx="4"/><rect x="23" y="27" width="20" height="19" rx="4"/></g></svg>
    <div class="t" style="left:0;width:1267px;text-align:center;top:297px;font-size:20.200px;font-weight:bold;color:#a4a4a4">Your canvas is empty</div>
    <div class="t" style="left:0;width:1267px;text-align:center;top:333.500px;font-size:13.900px;line-height:23px;color:#747474;white-space:normal">Add tasks from the sidebar, use the toolbar, or<br>right-click anywhere to start</div>
    <div class="abs" style="left:542px;top:392px;width:184px;height:70px;border-radius:8px;background:#4073ff;box-shadow:0 4px 14px rgba(64,115,255,.35)">
      <svg class="abs" style="left:23px;top:13px" width="43" height="43" viewBox="0 0 43 43"><path d="M21.500 2 V41 M2 21.500 H41" stroke="#5a86f5" stroke-width="6.500" stroke-linecap="round" fill="none"/></svg>
      <div class="t" style="left:74px;top:28px;font-size:13.100px;font-weight:bold;color:#fff">Add first node</div>
    </div>
    <!-- minimap -->
    <div class="abs" style="left:1098px;top:533px;width:160px;height:100px;border:1px solid #444;border-radius:6px;background:rgba(30,30,30,.85)"></div>
    <!-- zoom -->
    <div class="abs" style="left:574px;top:643px;width:120px;height:34px;border:1px solid #3f3f3f;border-radius:9px;background:#1e1e1e;box-shadow:0 2px 8px rgba(0,0,0,.3)">
      <svg class="abs" style="left:10px;top:11px" width="12" height="12" viewBox="0 0 12 12"><path d="M6 .5 V11.500 M.5 6 H11.500" stroke="#d0d0d0" stroke-width="1.700" fill="none"/></svg>
      <div class="abs" style="left:32px;top:9px;width:1px;height:15px;background:#3f3f3f"></div>
      <div class="t" style="left:33px;width:53px;text-align:center;top:11px;font-size:12.500px;color:#c0c0c0;-webkit-text-stroke:.3px #c0c0c0">100%</div>
      <div class="abs" style="left:86px;top:9px;width:1px;height:15px;background:#3f3f3f"></div>
      <svg class="abs" style="left:97px;top:11px" width="12" height="12" viewBox="0 0 12 12"><path d="M.5 6 H11.500" stroke="#d0d0d0" stroke-width="1.700" fill="none"/></svg>
    </div>
  </div>
</div>
</body>
</html>
